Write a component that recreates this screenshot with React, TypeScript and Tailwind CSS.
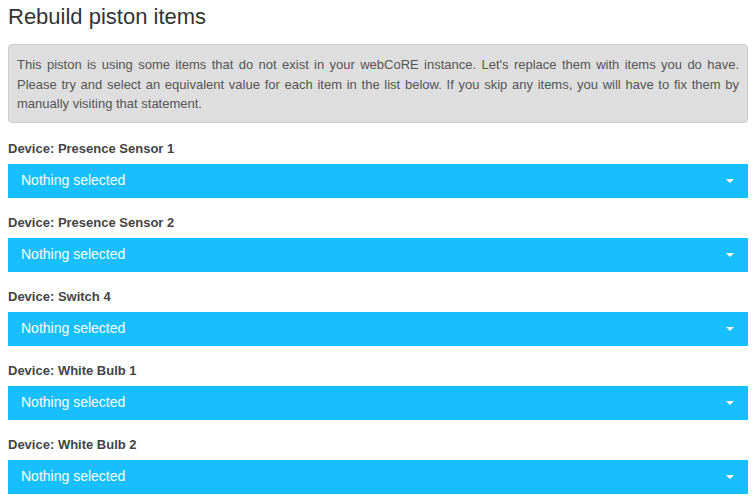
import React from 'react';

const devices = [
  'Presence Sensor 1',
  'Presence Sensor 2',
  'Switch 4',
  'White Bulb 1',
  'White Bulb 2',
];

const Select: React.FC = () => (
  <div className="flex h-[34px] items-center justify-between bg-[#18bfff] pl-[13px] pr-[14px] text-[14px] text-white">
    <span>Nothing selected</span>
    <span className="h-0 w-0 border-x-[4px] border-t-[4px] border-x-transparent border-t-white" />
  </div>
);

export default function App() {
  return (
    <div className="min-h-screen bg-white pl-[8px] pr-[6px] pt-[5px] font-['Liberation_Sans',Arial,sans-serif] text-[#333]">
      <h3 className="text-[22px] leading-[24px] text-[#333]">Rebuild piston items</h3>
      <div className="mt-[15px] rounded-[4px] border border-[#cccccc] bg-[#dedede] px-[8px] pb-[8px] pt-[10px] text-justify text-[13px] leading-[19.5px] text-[#555]">
        This piston is using some items that do not exist in your webCoRE instance. Let's replace them with items you do have. Please try and select an equivalent value for each item in the list below. If you skip any items, you will have to fix them by manually visiting that statement.
      </div>
      <div className="mt-[18px]">
        {devices.map((d) => (
          <div key={d} className="mb-[17px]">
            <div className="mb-[7px] text-[13px] font-bold leading-[16px] text-[#444]">Device: {d}</div>
            <Select />
          </div>
        ))}
      </div>
    </div>
  );
}
